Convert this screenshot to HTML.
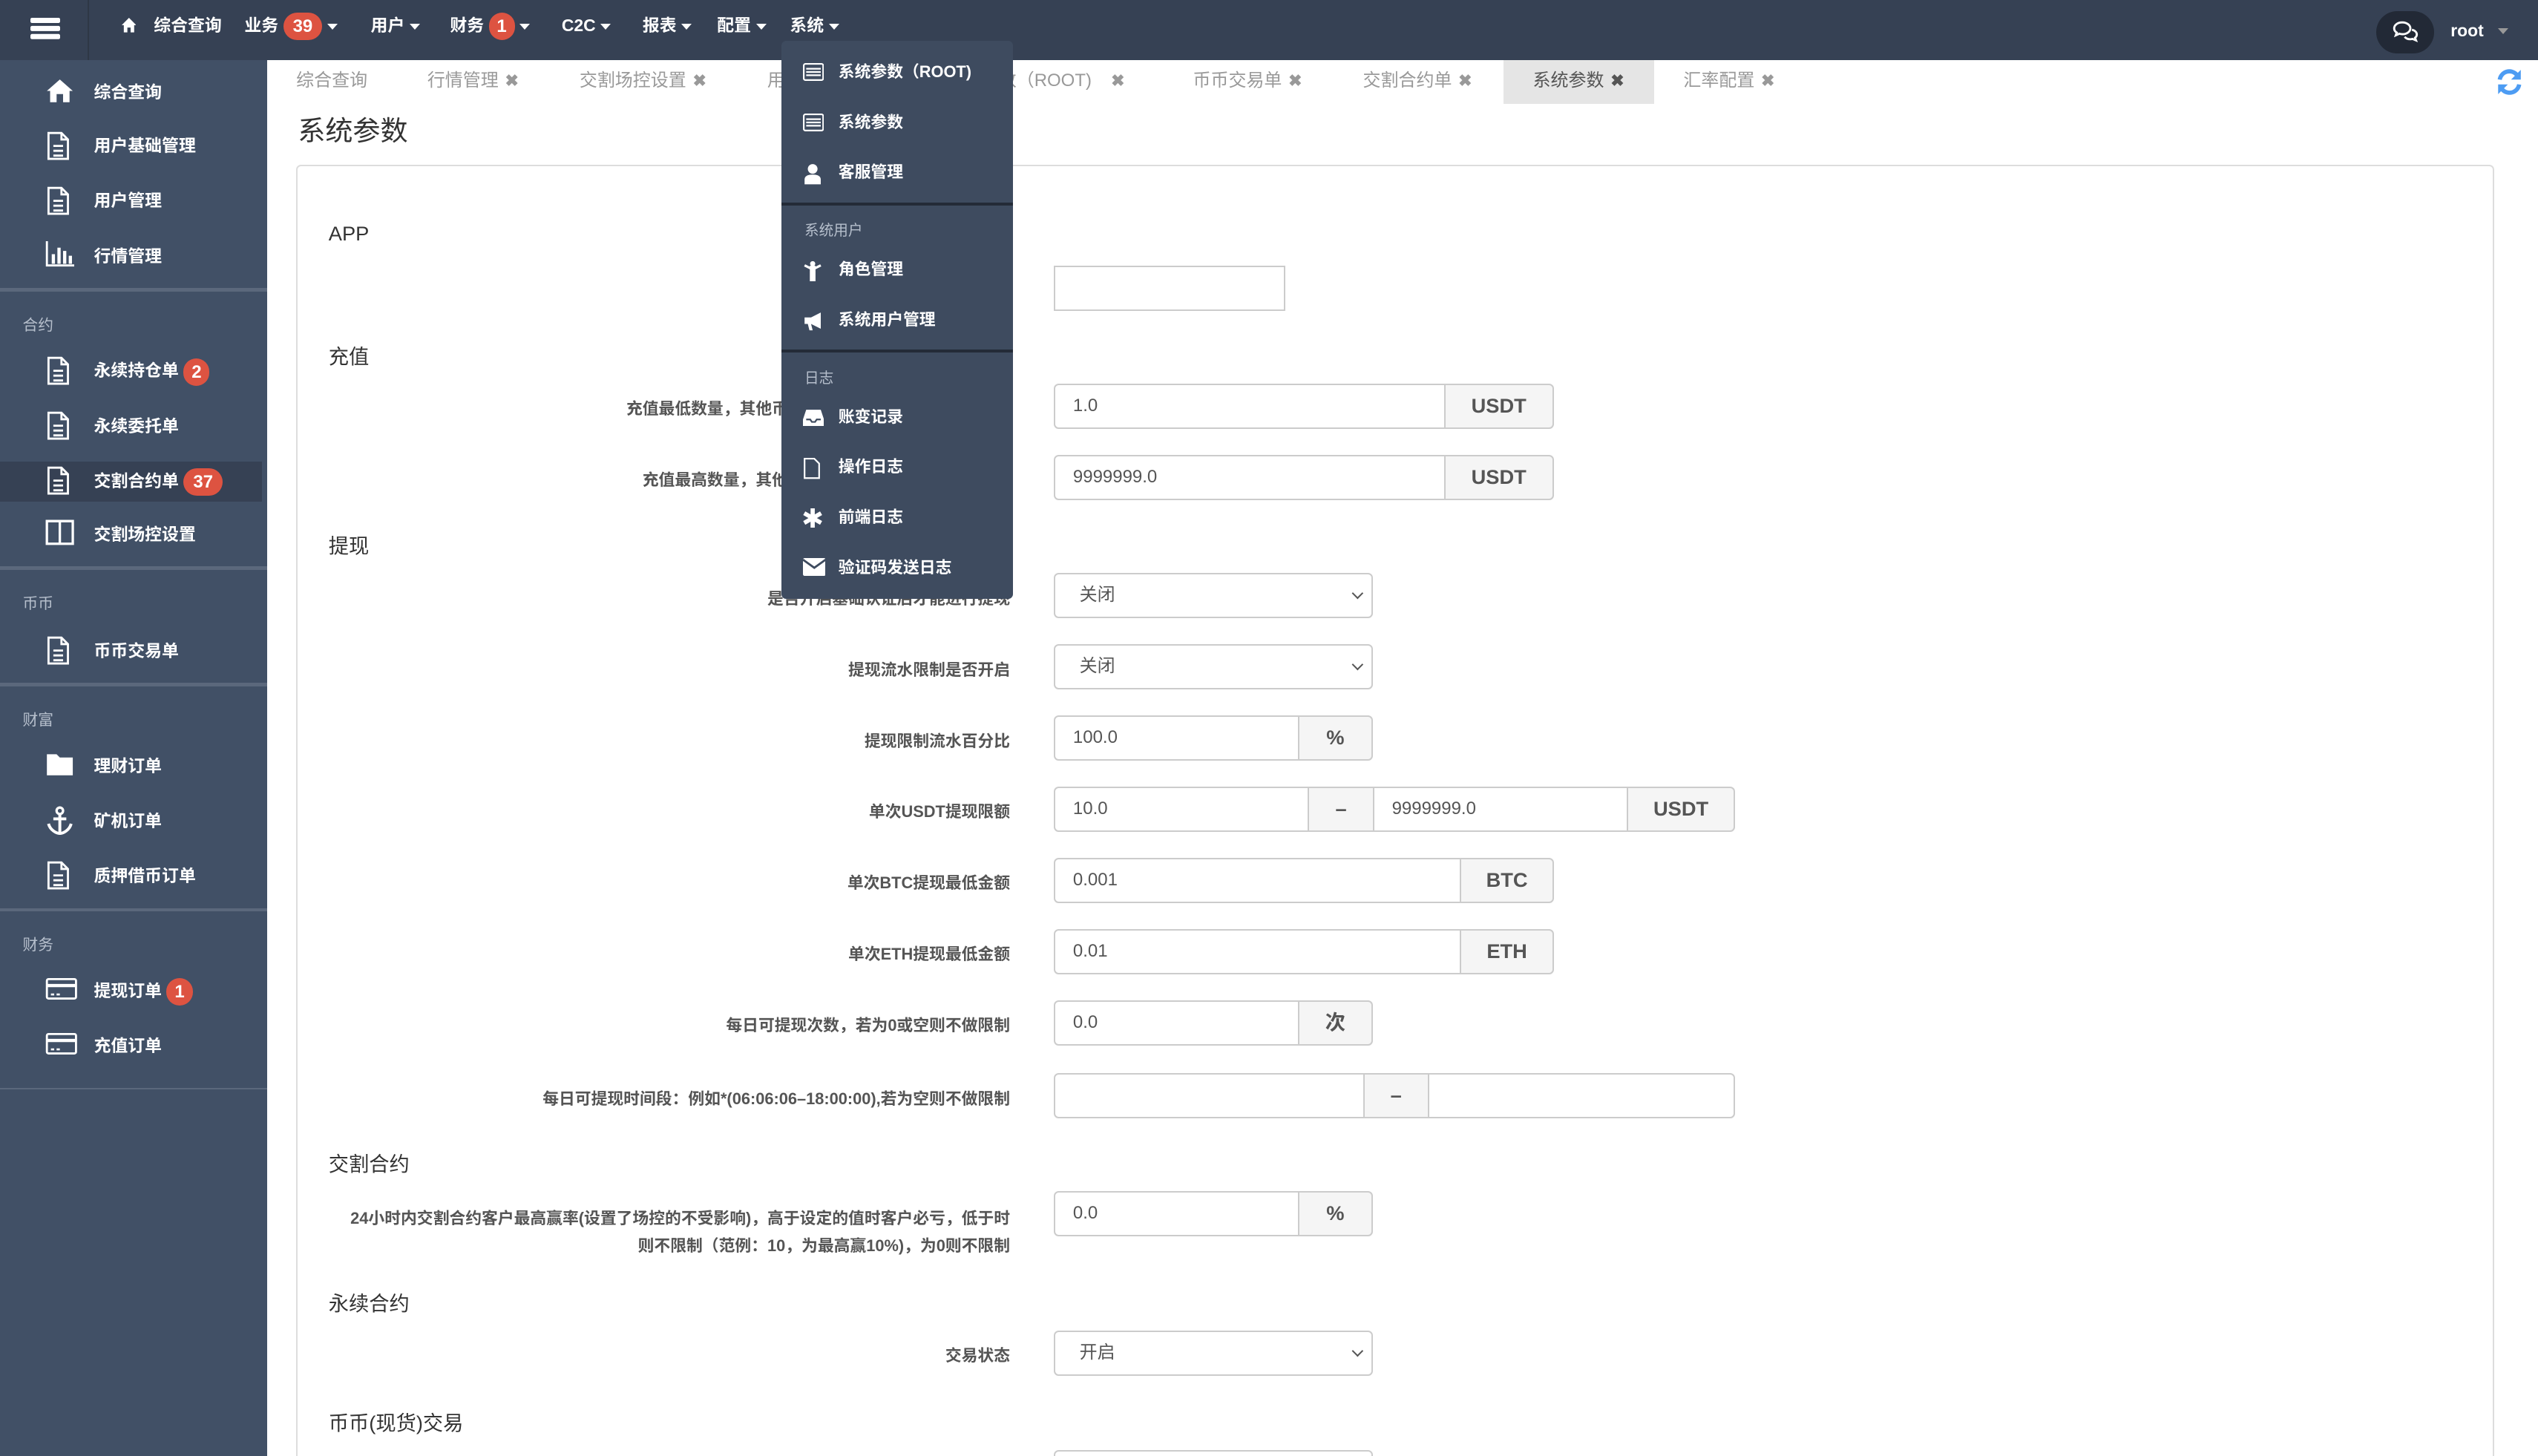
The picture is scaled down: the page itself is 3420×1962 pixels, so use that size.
<!DOCTYPE html>
<html><head><meta charset="utf-8"><style>
*{box-sizing:border-box;margin:0;padding:0}
html,body{width:3420px;height:1962px;overflow:hidden;background:#fff}
#w{zoom:2.18112;width:1568px;height:900px;position:relative;font-family:"Liberation Sans","Noto Sans CJK SC",sans-serif;overflow:hidden}
.a{position:absolute}
.top{left:0;top:0;width:1568px;height:37px;background:#364154}
.nav{top:0;height:32px;line-height:32px;color:#fff;font-size:10.5px;font-weight:bold;white-space:nowrap}
.car{display:inline-block;width:0;height:0;border-left:3.5px solid transparent;border-right:3.5px solid transparent;border-top:4px solid #fff;vertical-align:middle;margin-left:3px}
.bdg{display:inline-block;background:#dd5341;color:#fff;border-radius:9px;padding:0 6px;height:17px;line-height:17px;font-size:11px;vertical-align:middle;font-weight:bold}
.side{left:0;top:37px;width:165px;height:863px;background:#415066}
.si{left:0;width:165px;height:34px;color:#fff;font-size:10.5px;font-weight:bold;line-height:34px;padding-left:58px}
.si svg{position:absolute;left:28px;top:8px}
.sh{left:14px;color:#b6bfcc;font-size:9.5px}
.sep{left:0;width:165px;height:2px;background:#5b687c}
.tab{top:42px;height:22px;line-height:16px;font-size:11px;color:#999;white-space:nowrap}
.x{font-size:10px;color:#999;font-weight:bold;margin-left:4px}
.lbl{right:944px;text-align:right;font-size:10px;font-weight:bold;color:#555;white-space:nowrap}
.h{left:203px;font-size:12.5px;color:#333}
.in{height:28px;border:1px solid #ccc;background:#fff;font-size:11px;color:#555;line-height:26px;padding-left:11px}
.ad{height:28px;border:1px solid #ccc;background:#f5f5f5;font-size:12.5px;color:#555;font-weight:bold;text-align:center;line-height:26px}
.sel{height:28px;border:1px solid #ccc;border-radius:3px;background:#fff;font-size:11px;color:#555;line-height:26px;padding-left:15px}
.sel:after{content:"";position:absolute;right:6px;top:9px;width:4px;height:4px;border-right:1px solid #555;border-bottom:1px solid #555;transform:rotate(45deg)}
.dd{left:483px;top:25px;width:143px;height:345px;background:#3e4b5f;border-radius:3px}
.di{left:0;width:143px;height:31px;line-height:31px;color:#fff;font-size:10px;font-weight:bold;padding-left:35px;white-space:nowrap}
.di svg{position:absolute;left:13px;top:10px}
.dh{left:14px;color:#b6bfcc;font-size:9px}
.dsep{left:0;width:143px;height:2px;background:#232b37}
</style></head><body><div id="w">
<div class="a top"></div>
<div class="a" style="left:0;top:0;width:55px;height:37px;border-right:1px solid #2e3746"></div>
<div class="a" style="left:19px;top:11px;width:18px;height:3px;background:#fff;border-radius:1px;box-shadow:0 5px 0 #fff,0 10px 0 #fff"></div>
<svg class="a" style="left:75px;top:11px" width="9" height="9" viewBox="0 0 9 9"><path d="M4.5 0L0 4.5h1.3V9h2.2V6h2v3h2.2V4.5H9z" fill="#fff"/></svg>
<div class="a nav" style="left:95px">综合查询</div>
<div class="a nav" style="left:151px">业务 <span class="bdg">39</span><span class="car"></span></div>
<div class="a nav" style="left:229px">用户<span class="car"></span></div>
<div class="a nav" style="left:278px">财务 <span class="bdg" style="padding:0 5px">1</span><span class="car"></span></div>
<div class="a nav" style="left:347px">C2C<span class="car"></span></div>
<div class="a nav" style="left:397px">报表<span class="car"></span></div>
<div class="a nav" style="left:443px">配置<span class="car"></span></div>
<div class="a nav" style="left:488px">系统<span class="car"></span></div>
<div class="a" style="left:1468px;top:7px;width:36px;height:26px;border-radius:13px;background:#222936"></div>
<svg class="a" style="left:1478px;top:13px" width="16" height="13" viewBox="0 0 16 13"><path d="M6 1C3 1 1 2.7 1 4.7c0 1.1.6 2 1.6 2.6L2 9l2.2-1c.6.2 1.2.3 1.8.3 3 0 5-1.7 5-3.6S9 1 6 1z" fill="none" stroke="#fff" stroke-width="1.3"/><path d="M12 5.5c1.8.5 3 1.6 3 3 0 .8-.4 1.5-1.1 2l.6 1.6-2.1-.9c-.5.1-.9.2-1.4.2-1.5 0-2.8-.6-3.5-1.5" fill="none" stroke="#fff" stroke-width="1.3"/></svg>
<div class="a nav" style="left:1514px;top:3px;font-size:10.5px">root <span class="car" style="border-top-color:#999;margin-left:6px"></span></div>

<div class="a side"></div>
<div class="a si" style="top:40px"><svg width="18" height="16" viewBox="0 0 18 16"><path d="M9 1L1 8h2v7h4v-5h4v5h4V8h2z" fill="#fff"/></svg>综合查询</div>
<div class="a si" style="top:73px"><svg width="16" height="18" viewBox="0 0 16 18"><path d="M2 1h8l4 4v12H2z M10 1v4h4 M5 9h6M5 12h6M5 15h6" fill="none" stroke="#fff" stroke-width="1.3"/></svg>用户基础管理</div>
<div class="a si" style="top:107px"><svg width="16" height="18" viewBox="0 0 16 18"><path d="M2 1h8l4 4v12H2z M10 1v4h4 M5 9h6M5 12h6M5 15h6" fill="none" stroke="#fff" stroke-width="1.3"/></svg>用户管理</div>
<div class="a si" style="top:141px"><svg width="18" height="16" viewBox="0 0 18 16"><path d="M1 0v15h17" fill="none" stroke="#fff" stroke-width="1.3"/><path d="M4 8h2v6H4zM7.5 4h2v10h-2zM11 6h2v8h-2zM14.5 9h2v5h-2z" fill="#fff"/></svg>行情管理</div>
<div class="a sep" style="top:178px"></div>
<div class="a sh" style="top:193px">合约</div>
<div class="a si" style="top:212px"><svg width="16" height="18" viewBox="0 0 16 18"><path d="M2 1h8l4 4v12H2z M10 1v4h4 M5 9h6M5 12h6M5 15h6" fill="none" stroke="#fff" stroke-width="1.3"/></svg>永续持仓单 <span class="bdg" style="padding:0 5px">2</span></div>
<div class="a si" style="top:246px"><svg width="16" height="18" viewBox="0 0 16 18"><path d="M2 1h8l4 4v12H2z M10 1v4h4 M5 9h6M5 12h6M5 15h6" fill="none" stroke="#fff" stroke-width="1.3"/></svg>永续委托单</div>
<div class="a" style="left:0;top:285px;width:162px;height:25px;background:#364154"></div>
<div class="a si" style="top:280px"><svg width="16" height="18" viewBox="0 0 16 18"><path d="M2 1h8l4 4v12H2z M10 1v4h4 M5 9h6M5 12h6M5 15h6" fill="none" stroke="#fff" stroke-width="1.3"/></svg>交割合约单 <span class="bdg">37</span></div>
<div class="a si" style="top:313px"><svg width="18" height="16" viewBox="0 0 18 16"><path d="M1 1h16v14H1zM9 1v14" fill="none" stroke="#fff" stroke-width="1.5"/></svg>交割场控设置</div>
<div class="a sep" style="top:350px"></div>
<div class="a sh" style="top:365px">币币</div>
<div class="a si" style="top:385px"><svg width="16" height="18" viewBox="0 0 16 18"><path d="M2 1h8l4 4v12H2z M10 1v4h4 M5 9h6M5 12h6M5 15h6" fill="none" stroke="#fff" stroke-width="1.3"/></svg>币币交易单</div>
<div class="a sep" style="top:422px"></div>
<div class="a sh" style="top:437px">财富</div>
<div class="a si" style="top:456px"><svg width="18" height="16" viewBox="0 0 18 16"><path d="M1 2h6l2 2h8v11H1z" fill="#fff"/></svg>理财订单</div>
<div class="a si" style="top:490px"><svg width="18" height="18" viewBox="0 0 18 18"><circle cx="9" cy="3" r="2" fill="none" stroke="#fff" stroke-width="1.5"/><path d="M9 5v12M5 8h8M2 11c1 4 5 6 7 6s6-2 7-6" fill="none" stroke="#fff" stroke-width="1.8"/></svg>矿机订单</div>
<div class="a si" style="top:524px"><svg width="16" height="18" viewBox="0 0 16 18"><path d="M2 1h8l4 4v12H2z M10 1v4h4 M5 9h6M5 12h6M5 15h6" fill="none" stroke="#fff" stroke-width="1.3"/></svg>质押借币订单</div>
<div class="a sep" style="top:561px"></div>
<div class="a sh" style="top:576px">财务</div>
<div class="a si" style="top:595px"><svg width="20" height="16" viewBox="0 0 20 16"><rect x="1" y="2" width="18" height="12" rx="1" fill="none" stroke="#fff" stroke-width="1.3"/><path d="M1 6h18" stroke="#fff" stroke-width="2"/><path d="M3.5 11.5h2M7 11.5h2" stroke="#fff" stroke-width="1.2"/></svg>提现订单 <span class="bdg" style="padding:0 5px">1</span></div>
<div class="a si" style="top:629px"><svg width="20" height="16" viewBox="0 0 20 16"><rect x="1" y="2" width="18" height="12" rx="1" fill="none" stroke="#fff" stroke-width="1.3"/><path d="M1 6h18" stroke="#fff" stroke-width="2"/><path d="M3.5 11.5h2M7 11.5h2" stroke="#fff" stroke-width="1.2"/></svg>充值订单</div>
<div class="a sep" style="top:672px;height:1px"></div>

<div class="a tab" style="left:183px">综合查询</div>
<div class="a tab" style="left:264px">行情管理<span class="x">✖</span></div>
<div class="a tab" style="left:358px">交割场控设置<span class="x">✖</span></div>
<div class="a tab" style="left:474px">用户管理</div>
<div class="a tab" style="left:606px">参数（ROOT)<span class="x" style="margin-left:12px">✖</span></div>
<div class="a tab" style="left:737px">币币交易单<span class="x">✖</span></div>
<div class="a tab" style="left:842px">交割合约单<span class="x">✖</span></div>
<div class="a" style="left:929px;top:37px;width:93px;height:27px;background:#e5e5e5"></div>
<div class="a tab" style="left:947px;color:#555">系统参数<span class="x" style="color:#555">✖</span></div>
<div class="a tab" style="left:1040px">汇率配置<span class="x">✖</span></div>
<svg class="a" style="left:1542px;top:42px" width="17" height="17" viewBox="0 0 17 17"><path d="M2.5 7A6 6 0 0 1 13 4" fill="none" stroke="#4d9cf3" stroke-width="2.6"/><path d="M15.5 1v6h-6z" fill="#4d9cf3"/><path d="M14.5 10A6 6 0 0 1 4 13" fill="none" stroke="#4d9cf3" stroke-width="2.6"/><path d="M1.5 16v-6h6z" fill="#4d9cf3"/></svg>
<div class="a" style="left:184px;top:67px;font-size:17px;color:#333">系统参数</div>

<div class="a" style="left:183px;top:102px;width:1358px;height:820px;border:1px solid #ddd;border-radius:3px"></div>
<div class="a h" style="top:137px">APP</div>
<div class="a in" style="left:651px;top:164px;width:143px"></div>
<div class="a h" style="top:210px">充值</div>
<div class="a lbl" style="top:245px">充值最低数量，其他币种按照汇率换算成USDT后比较</div>
<div class="a in" style="left:651px;top:237px;width:242px;border-radius:3px 0 0 3px">1.0</div><div class="a ad" style="left:892px;top:237px;width:68px;border-radius:0 3px 3px 0">USDT</div>
<div class="a lbl" style="top:289px">充值最高数量，其他币种按照汇率换算成USDT比较</div>
<div class="a in" style="left:651px;top:281px;width:242px;border-radius:3px 0 0 3px">9999999.0</div><div class="a ad" style="left:892px;top:281px;width:68px;border-radius:0 3px 3px 0">USDT</div>
<div class="a h" style="top:327px">提现</div>
<div class="a lbl" style="top:362px">是否开启基础认证后才能进行提现</div>
<div class="a sel" style="left:651px;top:354px;width:197px">关闭</div>
<div class="a lbl" style="top:406px">提现流水限制是否开启</div>
<div class="a sel" style="left:651px;top:398px;width:197px">关闭</div>
<div class="a lbl" style="top:450px">提现限制流水百分比</div>
<div class="a in" style="left:651px;top:442px;width:152px;border-radius:3px 0 0 3px">100.0</div><div class="a ad" style="left:802px;top:442px;width:46px;border-radius:0 3px 3px 0">%</div>
<div class="a lbl" style="top:494px">单次USDT提现限额</div>
<div class="a in" style="left:651px;top:486px;width:158px;border-radius:3px 0 0 3px">10.0</div><div class="a ad" style="left:808px;top:486px;width:41px;border-radius:0">–</div><div class="a in" style="left:848px;top:486px;width:158px">9999999.0</div><div class="a ad" style="left:1005px;top:486px;width:67px;border-radius:0 3px 3px 0">USDT</div>
<div class="a lbl" style="top:538px">单次BTC提现最低金额</div>
<div class="a in" style="left:651px;top:530px;width:252px;border-radius:3px 0 0 3px">0.001</div><div class="a ad" style="left:902px;top:530px;width:58px;border-radius:0 3px 3px 0">BTC</div>
<div class="a lbl" style="top:582px">单次ETH提现最低金额</div>
<div class="a in" style="left:651px;top:574px;width:252px;border-radius:3px 0 0 3px">0.01</div><div class="a ad" style="left:902px;top:574px;width:58px;border-radius:0 3px 3px 0">ETH</div>
<div class="a lbl" style="top:626px">每日可提现次数，若为0或空则不做限制</div>
<div class="a in" style="left:651px;top:618px;width:152px;border-radius:3px 0 0 3px">0.0</div><div class="a ad" style="left:802px;top:618px;width:46px;border-radius:0 3px 3px 0">次</div>
<div class="a lbl" style="top:671px">每日可提现时间段：例如*(06:06:06–18:00:00),若为空则不做限制</div>
<div class="a in" style="left:651px;top:663px;width:192px;border-radius:3px 0 0 3px"></div><div class="a ad" style="left:842px;top:663px;width:41px;border-radius:0">–</div><div class="a in" style="left:882px;top:663px;width:190px;border-radius:0 3px 3px 0"></div>
<div class="a h" style="top:709px">交割合约</div>
<div class="a lbl" style="top:744px;line-height:17px">24小时内交割合约客户最高赢率(设置了场控的不受影响)，高于设定的值时客户必亏，低于时<br>则不限制（范例：10，为最高赢10%)，为0则不限制</div>
<div class="a in" style="left:651px;top:736px;width:152px;border-radius:3px 0 0 3px">0.0</div><div class="a ad" style="left:802px;top:736px;width:46px;border-radius:0 3px 3px 0">%</div>
<div class="a h" style="top:795px">永续合约</div>
<div class="a lbl" style="top:830px">交易状态</div>
<div class="a sel" style="left:651px;top:822px;width:197px">开启</div>
<div class="a h" style="top:869px">币币(现货)交易</div>
<div class="a sel" style="left:651px;top:896px;width:197px"></div>

<div class="a dd">
<div class="a di" style="top:4px"><svg width="13" height="11" viewBox="0 0 13 11"><rect x=".5" y=".5" width="12" height="10" rx="1" fill="none" stroke="#fff"/><path d="M2 3h9v1H2zM2 5h9v1H2zM2 7h9v1H2z" fill="#fff"/></svg>系统参数（ROOT)</div>
<div class="a di" style="top:35px"><svg width="13" height="11" viewBox="0 0 13 11"><rect x=".5" y=".5" width="12" height="10" rx="1" fill="none" stroke="#fff"/><path d="M2 3h9v1H2zM2 5h9v1H2zM2 7h9v1H2z" fill="#fff"/></svg>系统参数</div>
<div class="a di" style="top:66px"><svg width="12" height="13" viewBox="0 0 12 13"><circle cx="6" cy="3.5" r="3" fill="#fff"/><path d="M1 13v-3c0-2 2-3 5-3s5 1 5 3v3z" fill="#fff"/></svg>客服管理</div>
<div class="a dsep" style="top:100px"></div>
<div class="a dh" style="top:110px">系统用户</div>
<div class="a di" style="top:126px"><svg width="12" height="13" viewBox="0 0 12 13"><circle cx="6" cy="2" r="1.6" fill="#fff"/><path d="M5 4h2v9H5zM1 3l4 2M11 3L7 5" stroke="#fff" stroke-width="1.5" fill="#fff"/></svg>角色管理</div>
<div class="a di" style="top:157px"><svg width="14" height="13" viewBox="0 0 14 13"><path d="M1 4h4l6-3v10L5 8H1zM3 8l1 4h2L5 8" fill="#fff"/></svg>系统用户管理</div>
<div class="a dsep" style="top:191px"></div>
<div class="a dh" style="top:201px">日志</div>
<div class="a di" style="top:217px"><svg width="13" height="11" viewBox="0 0 13 11"><path d="M2 1h9l2 6v4H0V7z" fill="#fff"/><path d="M2 7h2.5l1 1.5h2L8.5 7H11" stroke="#3e4b5f" fill="none"/></svg>账变记录</div>
<div class="a di" style="top:248px"><svg width="11" height="13" viewBox="0 0 11 13"><path d="M1 .5h6l3 3v9H1z" fill="none" stroke="#fff"/></svg>操作日志</div>
<div class="a di" style="top:279px"><svg width="12" height="12" viewBox="0 0 12 12"><path d="M6 0v12M.8 3l10.4 6M11.2 3L.8 9" stroke="#fff" stroke-width="2.6"/></svg>前端日志</div>
<div class="a di" style="top:310px"><svg width="14" height="11" viewBox="0 0 14 11"><rect x="0" y="0" width="14" height="11" rx="1" fill="#fff"/><path d="M0 1l7 5 7-5" stroke="#3e4b5f" fill="none" stroke-width="1.3"/></svg>验证码发送日志</div>
</div>
</div></body></html>
